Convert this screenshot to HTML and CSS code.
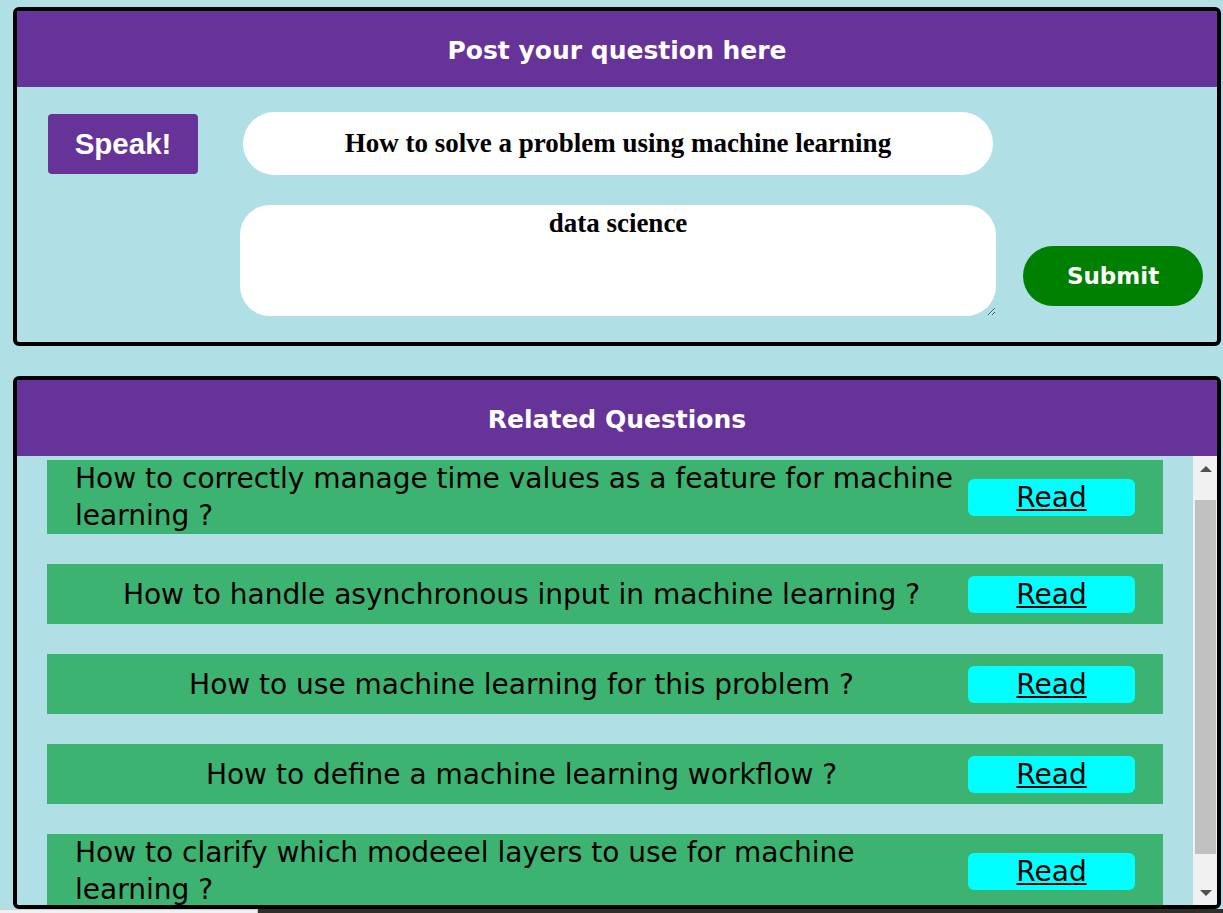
FILE: index.html
```html
<!DOCTYPE html>
<html lang="en">
<head>
<meta charset="utf-8">
<title>Post your question</title>
<link rel="stylesheet" href="styles.css">
</head>
<body>
<div class="page">
  <section class="box ask">
    <h2 class="box-head">Post your question here</h2>
    <div class="ask-body">
      <div class="row-one">
        <button class="speak" type="button">Speak!</button>
        <input class="question" type="text" value="How to solve a problem using machine learning">
      </div>
      <div class="row-two">
        <textarea class="tags">data science</textarea>
        <button class="submit" type="button">Submit</button>
      </div>
    </div>
  </section>

  <section class="box related">
    <h2 class="box-head">Related Questions</h2>
    <div class="list-area">
      <div class="list">
        <div class="item"><p class="q">How to correctly manage time values as a feature for machine learning ?</p><a class="read" href="#">Read</a></div>
        <div class="item"><p class="q">How to handle asynchronous input in machine learning ?</p><a class="read" href="#">Read</a></div>
        <div class="item"><p class="q">How to use machine learning for this problem ?</p><a class="read" href="#">Read</a></div>
        <div class="item"><p class="q">How to define a machine learning workflow ?</p><a class="read" href="#">Read</a></div>
        <div class="item"><p class="q">How to clarify which modeeel layers to use for machine learning ?</p><a class="read" href="#">Read</a></div>
      </div>
      <div class="scrollbar" aria-hidden="true">
        <div class="sb-btn"><span class="arrow-up"></span></div>
        <div class="sb-track"><div class="sb-thumb"></div></div>
        <div class="sb-btn"><span class="arrow-down"></span></div>
      </div>
    </div>
  </section>
</div>
<div class="bottom-strip" aria-hidden="true"><span class="strip-light"></span><span class="strip-dark"></span></div>
</body>
</html>
```

FILE: styles.css
```css
html, body {
  margin: 0;
  padding: 0;
  background: #b0e0e6;
}

body {
  font-family: "DejaVu Sans", sans-serif;
  overflow: hidden;
}

.page {
  padding: 7px 0 0 13px;
}

.box {
  width: 1208px;
  box-sizing: border-box;
  border: 4px solid #000;
  border-radius: 6px;
  overflow: hidden;
}

.related {
  margin-top: 30px;
}

.box-head {
  margin: 0;
  background: #663399;
  color: #fff;
  height: 76px;
  display: flex;
  align-items: center;
  justify-content: center;
  font-family: "DejaVu Sans", sans-serif;
  font-weight: bold;
  font-size: 25px;
  padding-top: 2px;
  box-sizing: border-box;
}

.ask-body {
  padding: 25px 0 26px 0;
}

.row-one {
  display: flex;
  align-items: flex-start;
}

.speak {
  margin: 2px 0 0 31px;
  width: 150px;
  height: 60px;
  border: none;
  border-radius: 4px;
  background: #663399;
  color: #fff;
  font-family: "Liberation Sans", Arial, sans-serif;
  font-weight: bold;
  font-size: 29.5px;
  padding: 0;
}

.question {
  margin-left: 45px;
  width: 750px;
  height: 63px;
  box-sizing: border-box;
  border: none;
  border-radius: 32px;
  background: #fff;
  text-align: center;
  font-family: "Liberation Serif", "Times New Roman", serif;
  font-weight: bold;
  font-size: 27px;
  color: #000;
  padding: 0 10px;
  outline: none;
}

.row-two {
  display: flex;
  align-items: flex-end;
  margin-top: 30px;
  padding-left: 223px;
}

.tags {
  width: 756px;
  height: 111px;
  box-sizing: border-box;
  border: none;
  border-radius: 30px;
  background: #fff;
  text-align: center;
  font-family: "Liberation Serif", "Times New Roman", serif;
  font-weight: bold;
  font-size: 27px;
  color: #000;
  padding: 3px 20px;
  outline: none;
  display: block;
}

.submit {
  margin: 0 0 10px 27px;
  width: 180px;
  height: 60px;
  border: none;
  border-radius: 30px;
  background: #008000;
  color: #fff;
  font-family: "DejaVu Sans", sans-serif;
  font-weight: bold;
  font-size: 23px;
  padding: 0;
}

.list-area {
  display: grid;
  grid-template-columns: 1fr 24px;
  height: 449px;
}

.list {
  overflow: hidden;
  background: #b0e0e6;
}

.scrollbar {
  display: flex;
  flex-direction: column;
  background: #f1f1f1;
}

.sb-btn {
  height: 25px;
  flex: 0 0 25px;
  display: flex;
  align-items: center;
  justify-content: center;
  padding-left: 1px;
}

.arrow-up {
  width: 0;
  height: 0;
  border-left: 6px solid transparent;
  border-right: 6px solid transparent;
  border-bottom: 6px solid #505050;
  margin-top: 1px;
}

.arrow-down {
  width: 0;
  height: 0;
  border-left: 6px solid transparent;
  border-right: 6px solid transparent;
  border-top: 6px solid #505050;
}

.sb-track {
  flex: 1;
  padding: 19px 1px 26px 2px;
}

.sb-thumb {
  height: 100%;
  background: #c1c1c1;
}

.item {
  margin: 30px;
  min-height: 60px;
  padding: 0 28px;
  background: #3cb371;
  display: flex;
  align-items: center;
}

.item:first-child {
  margin-top: 4px;
}

.q {
  margin: 0 auto;
  font-family: "DejaVu Sans", sans-serif;
  font-size: 28px;
  line-height: 37px;
  color: #000;
}

.read {
  flex: 0 0 167px;
  height: 37px;
  border-radius: 6px;
  background: #00ffff;
  color: #000;
  text-decoration: underline;
  font-family: "DejaVu Sans", sans-serif;
  font-size: 28px;
  line-height: 37px;
  text-align: center;
}

.bottom-strip {
  display: grid;
  grid-template-columns: 258px 1fr;
  height: 4px;
  margin-top: 0;
}

.strip-light {
  background: #f0f0f0;
  border-top: 1px solid #d0d0d0;
  border-right: 1px solid #c8c8c8;
}

.strip-dark {
  background: #2f2f2a;
}
```
